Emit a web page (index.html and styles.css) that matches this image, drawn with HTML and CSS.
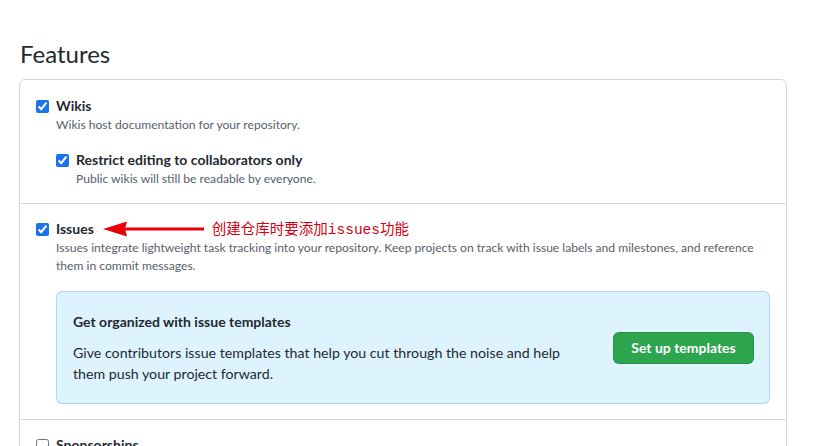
FILE: index.html
```html
<!DOCTYPE html>
<html lang="en">
<head>
<meta charset="utf-8">
<title>Features</title>
<link rel="stylesheet" href="styles.css">
</head>
<body>
<h2 class="title">Features</h2>
<div class="box">
  <div class="row">
    <div class="opt">
      <input type="checkbox" class="cb" checked>
      <label class="opt-label">Wikis</label>
    </div>
    <p class="note">Wikis host documentation for your repository.</p>
    <div class="sub">
      <div class="opt">
        <input type="checkbox" class="cb" checked>
        <label class="opt-label">Restrict editing to collaborators only</label>
      </div>
      <p class="note">Public wikis will still be readable by everyone.</p>
    </div>
  </div>
  <div class="row">
    <div class="opt">
      <input type="checkbox" class="cb" checked>
      <label class="opt-label">Issues</label>
      <svg class="arrow" width="102" height="16" viewBox="0 0 102 16"><path d="M20 6.5 H101 V9.5 H20 Z" fill="#e8000b"/><path d="M0 8 L24 0.5 L22 8 L24 15.5 Z" fill="#e8000b"/></svg>
      <span class="annot">创建仓库时要添加<span class="mono">issues</span>功能</span>
    </div>
    <p class="note">Issues integrate lightweight task tracking into your repository. Keep projects on track with issue labels and milestones, and reference them in commit messages.</p>
    <div class="promo">
      <div class="promo-text">
        <h4 class="promo-title">Get organized with issue templates</h4>
        <p class="promo-desc">Give contributors issue templates that help you cut through the noise and help them push your project forward.</p>
      </div>
      <button class="btn">Set up templates</button>
    </div>
  </div>
  <div class="row">
    <div class="opt">
      <input type="checkbox" class="cb">
      <label class="opt-label">Sponsorships</label>
    </div>
  </div>
</div>
</body>
</html>
```
FILE: styles.css
```css
* { box-sizing: border-box; }
html, body { margin: 0; background: #fff; }
body {
  padding: 0 31px 0 19px;
  font-family: "Segoe UI", Lato, "Noto Sans", sans-serif;
  color: #24292f;
  overflow: hidden;
  height: 446px;
}
.title {
  margin: 36px 0 7px 1px;
  font-size: 24px;
  font-weight: 400;
  line-height: 36px;
}
.box {
  border: 1px solid #d0d7de;
  border-radius: 6px;
}
.row {
  padding: 15px 16px 15px 16px;
  border-top: 1px solid #d0d7de;
}
.row:first-child { border-top: 0; padding-top: 16px; }
.opt {
  display: flex;
  align-items: center;
  height: 20px;
}
.cb {
  width: 13px;
  height: 13px;
  margin: 0 7px 0 0;
  accent-color: #1a73e8;
}
.opt-label {
  font-size: 14px;
  font-weight: 700;
  line-height: 20px;
}
.note {
  margin: 0 0 0 20px;
  font-size: 12.1px;
  line-height: 18px;
  color: #57606a;
}
.sub {
  margin: 16px 0 0 20px;
}
.arrow {
  margin-left: 9px;
  flex: none;
}
.annot {
  margin-left: 7px;
  font-family: "Noto Sans CJK SC", sans-serif;
  font-size: 14.5px;
  color: #d40010;
  line-height: 20px;
  white-space: nowrap;
}
.mono { font-family: "Liberation Mono", monospace; }
.promo {
  margin: 16px 0 0 20px;
  background: #ddf4ff;
  border: 1px solid rgba(84, 174, 255, 0.4);
  border-radius: 6px;
  padding: 20px 15px 19px 16px;
  display: flex;
  align-items: center;
  justify-content: space-between;
}
.promo-text { width: 500px; }
.promo-title {
  margin: 0;
  font-size: 14px;
  font-weight: 700;
  line-height: 20px;
}
.promo-desc {
  margin: 10px 0 0;
  font-size: 14.2px;
  line-height: 21px;
  color: #24292f;
}
.btn {
  font-family: inherit;
  font-size: 14px;
  font-weight: 700;
  line-height: 20px;
  color: #fff;
  background: #2da44e;
  border: 1px solid rgba(27, 31, 36, 0.15);
  border-radius: 6px;
  padding: 5px 10px;
  width: 141px;
  height: 32px;
  white-space: nowrap;
}
```
